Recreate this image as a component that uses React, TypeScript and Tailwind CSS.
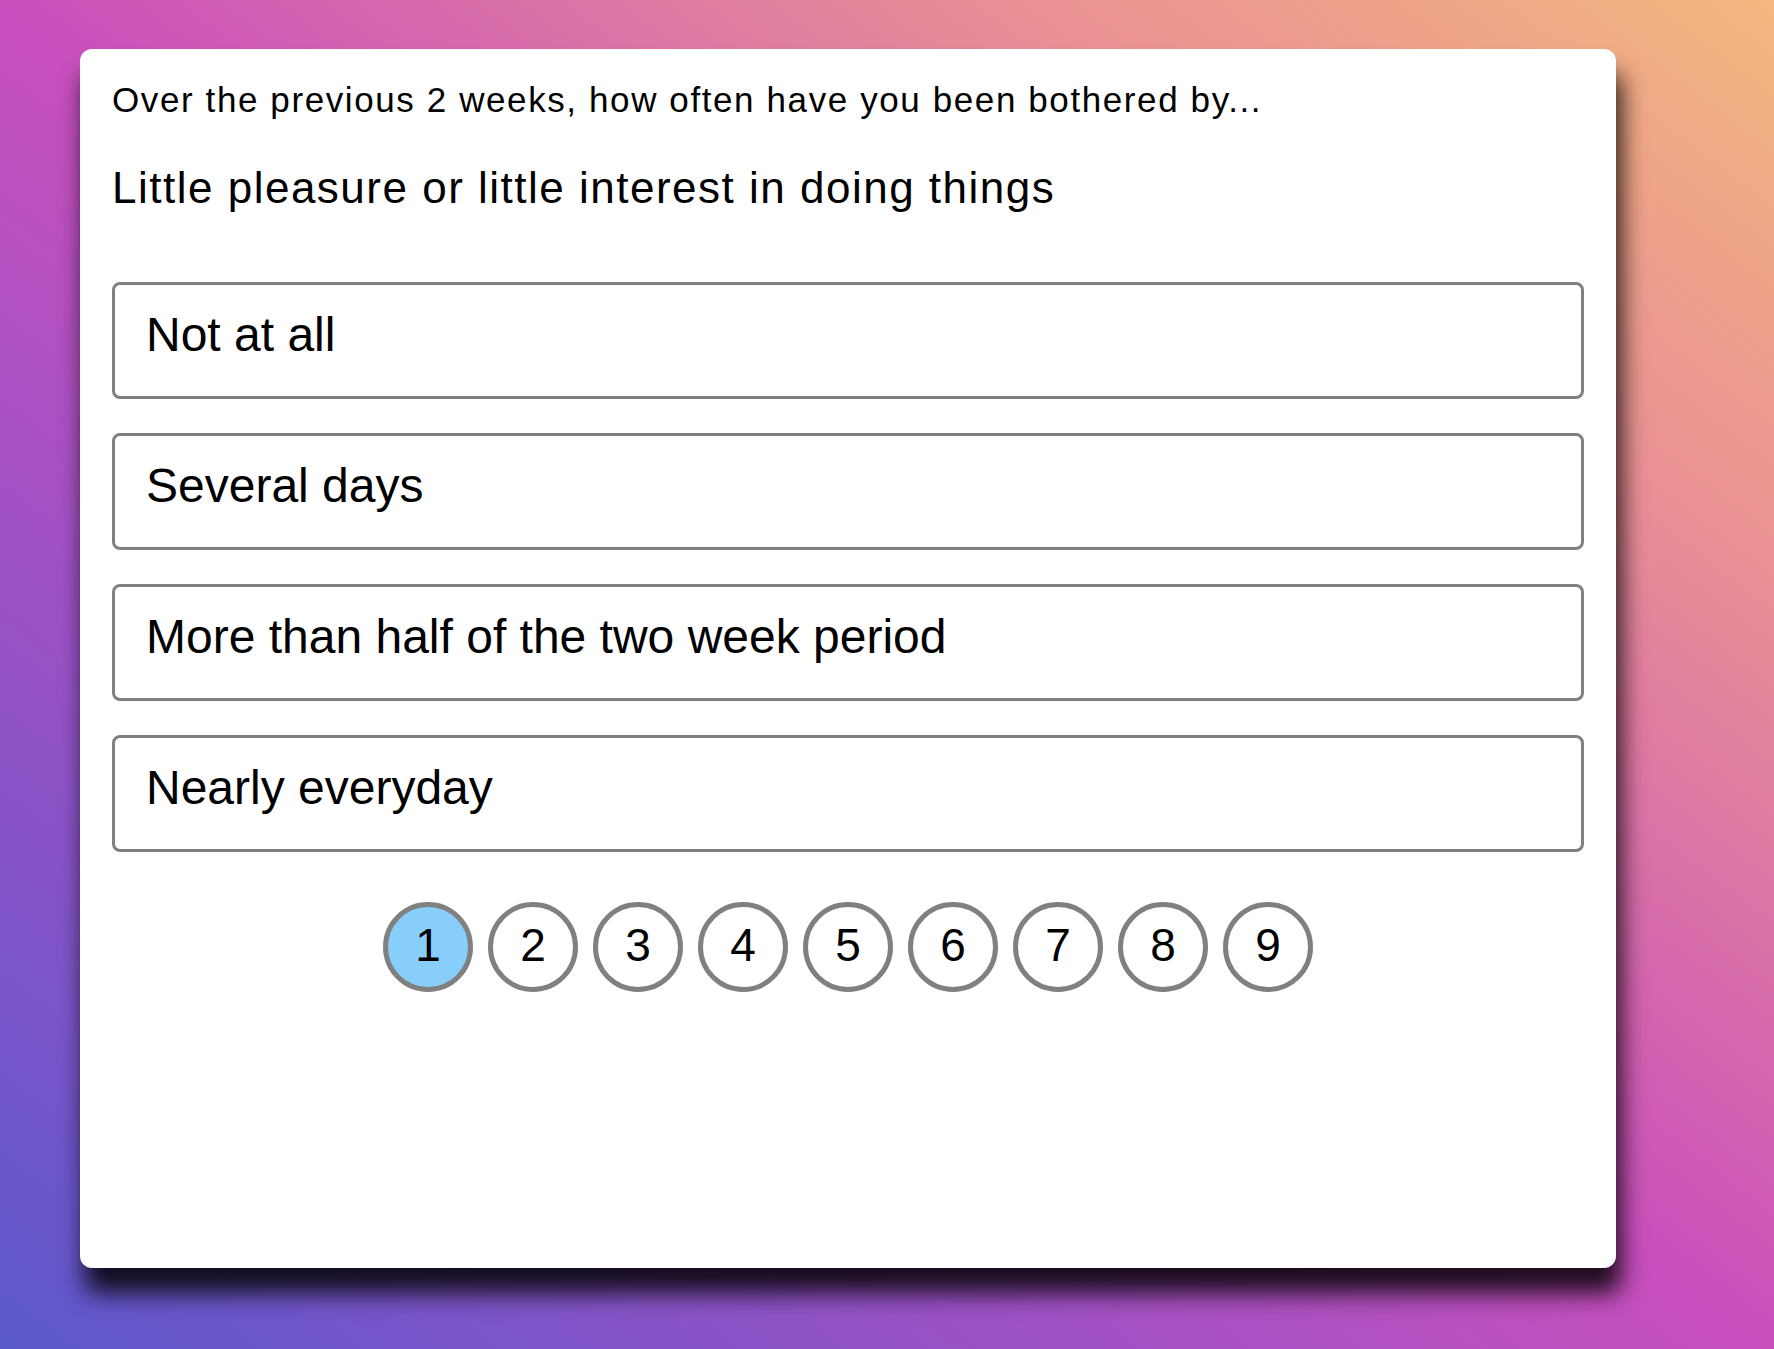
import React, { useState } from "react";

const options = [
    "Not at all",
    "Several days",
    "More than half of the two week period",
    "Nearly everyday",
];

const steps = [1, 2, 3, 4, 5, 6, 7, 8, 9];

export default function App() {
    const [current] = useState(1);

    return (
        <div className="min-h-screen w-full bg-[linear-gradient(to_top_right,#5a58cc_0%,#9a52c6_28%,#c94fbd_50%,#e98f95_78%,#f4b77e_100%)] pl-[80px] pt-[49px] pb-[81px] font-['Liberation_Sans',Arial,sans-serif] text-black">
            <div className="w-[1536px] h-[1219px] rounded-[12px] bg-white px-[32px] pt-[31px] shadow-[5px_25px_25px_rgba(0,0,0,0.85)]">
                <p className="text-[35px] leading-[40px] tracking-[1.6px]">
                    Over the previous 2 weeks, how often have you been bothered by...
                </p>
                <h2 className="mt-[43px] text-[44px] leading-[50px] tracking-[1.5px]">
                    Little pleasure or little interest in doing things
                </h2>

                <div className="mt-[69px] flex flex-col gap-[34px]">
                    {options.map((opt) => (
                        <button
                            key={opt}
                            className="w-full text-left border-[3px] border-[#808080] rounded-[8px] bg-white pl-[31px] pt-[22px] pb-[33px] text-[48px] leading-[56px]"
                        >
                            {opt}
                        </button>
                    ))}
                </div>

                {/* question progress */}
                <div className="mt-[50px] flex justify-center gap-[15px]">
                    {steps.map((n) => (
                        <div
                            key={n}
                            className={
                                n === current
                                    ? "w-[90px] h-[90px] rounded-full border-[5px] border-[#808080] bg-[#87cefa] flex items-center justify-center text-[46px] leading-none pb-[5px]"
                                    : "w-[90px] h-[90px] rounded-full border-[5px] border-[#808080] bg-white flex items-center justify-center text-[46px] leading-none pb-[5px]"
                            }
                        >
                            {n}
                        </div>
                    ))}
                </div>
            </div>
        </div>
    );
}
